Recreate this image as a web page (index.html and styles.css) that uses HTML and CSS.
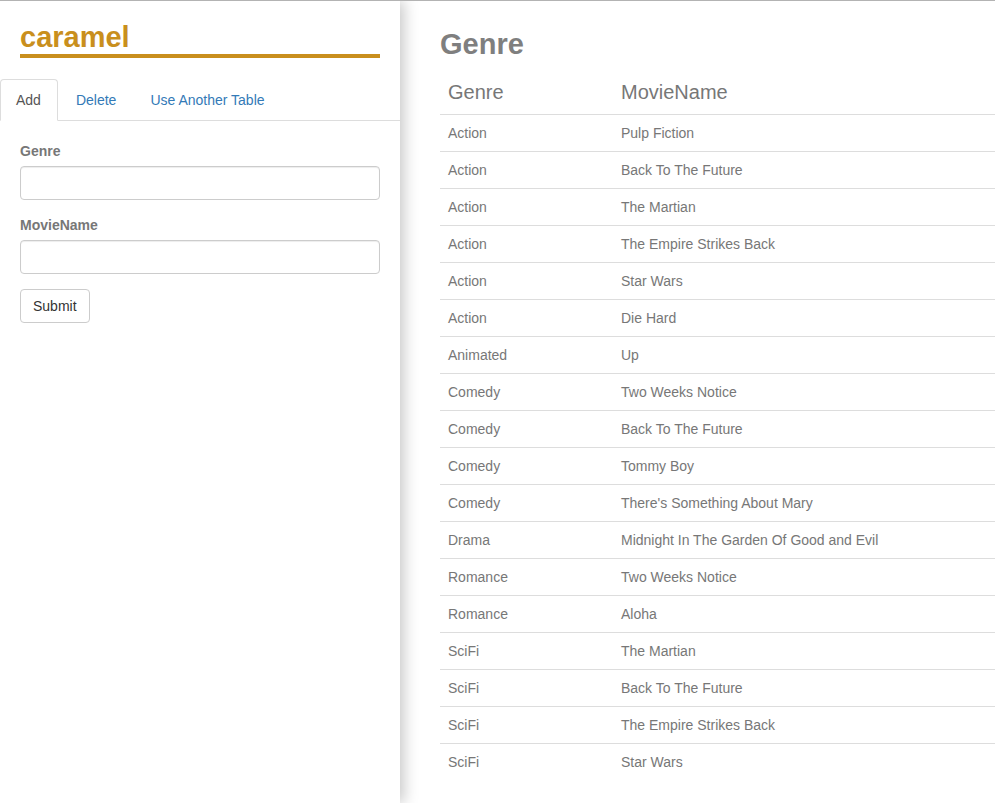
FILE: index.html
```html
<!DOCTYPE html>
<html>
<head>
<meta charset="utf-8">
<link rel="stylesheet" href="styles.css">
</head>
<body>
<div class="app">
  <aside class="sidebar">
    <h1 class="brand">caramel</h1>
    <ul class="tabs">
      <li class="tab active"><a>Add</a></li>
      <li class="tab"><a>Delete</a></li>
      <li class="tab"><a>Use Another Table</a></li>
    </ul>
    <form class="form">
      <div class="group">
        <label class="label">Genre</label>
        <input class="input" type="text">
      </div>
      <div class="group">
        <label class="label">MovieName</label>
        <input class="input" type="text">
      </div>
      <button class="btn" type="button">Submit</button>
    </form>
  </aside>
  <main class="content">
    <h2 class="title">Genre</h2>
    <table class="table">
      <thead>
        <tr><th class="col1">Genre</th><th>MovieName</th></tr>
      </thead>
      <tbody>
        <tr><td>Action</td><td>Pulp Fiction</td></tr>
        <tr><td>Action</td><td>Back To The Future</td></tr>
        <tr><td>Action</td><td>The Martian</td></tr>
        <tr><td>Action</td><td>The Empire Strikes Back</td></tr>
        <tr><td>Action</td><td>Star Wars</td></tr>
        <tr><td>Action</td><td>Die Hard</td></tr>
        <tr><td>Animated</td><td>Up</td></tr>
        <tr><td>Comedy</td><td>Two Weeks Notice</td></tr>
        <tr><td>Comedy</td><td>Back To The Future</td></tr>
        <tr><td>Comedy</td><td>Tommy Boy</td></tr>
        <tr><td>Comedy</td><td>There's Something About Mary</td></tr>
        <tr><td>Drama</td><td>Midnight In The Garden Of Good and Evil</td></tr>
        <tr><td>Romance</td><td>Two Weeks Notice</td></tr>
        <tr><td>Romance</td><td>Aloha</td></tr>
        <tr><td>SciFi</td><td>The Martian</td></tr>
        <tr><td>SciFi</td><td>Back To The Future</td></tr>
        <tr><td>SciFi</td><td>The Empire Strikes Back</td></tr>
        <tr><td>SciFi</td><td>Star Wars</td></tr>
      </tbody>
    </table>
  </main>
</div>
</body>
</html>
```
FILE: styles.css
```css
* { box-sizing: border-box; }
html, body { height: 100%; }
body {
  margin: 0;
  border-top: 1px solid #b3b3b3;
  font-family: "Liberation Sans", Arial, sans-serif;
  font-size: 14px;
  line-height: 20px;
  color: #333;
  background: #fff;
  overflow: hidden;
}
.app {
  display: flex;
  height: 802px;
}
.sidebar {
  width: 400px;
  flex: 0 0 400px;
  height: 100%;
  padding-top: 20px;
  background: #fff;
  box-shadow: 4px 0 14px rgba(0,0,0,0.22);
  position: relative;
  z-index: 1;
}
.brand {
  margin: 0 20px;
  font-size: 29px;
  font-weight: bold;
  line-height: 32px;
  color: #c98f1d;
  padding-bottom: 1px;
  border-bottom: 4px solid #c98f1d;
}
.tabs {
  list-style: none;
  margin: 21px 0 0;
  padding: 0;
  display: flex;
  border-bottom: 1px solid #ddd;
}
.tab {
  margin-bottom: -1px;
  margin-right: 2px;
}
.tab a {
  display: block;
  padding: 10px 15px;
  line-height: 20px;
  border: 1px solid transparent;
  border-radius: 4px 4px 0 0;
  color: #337ab7;
}
.tab.active a {
  padding: 10px 16px 10px 15px;
  color: #555;
  background: #fff;
  border-color: #ddd #ddd transparent #ddd;
}
.form {
  padding: 20px;
}
.group {
  margin-bottom: 15px;
}
.label {
  display: block;
  font-weight: bold;
  color: #777;
  margin-bottom: 5px;
}
.input {
  display: block;
  width: 100%;
  height: 34px;
  padding: 6px 12px;
  border: 1px solid #ccc;
  border-radius: 4px;
  box-shadow: inset 0 1px 1px rgba(0,0,0,0.075);
  font: inherit;
  margin: 0;
}
.btn {
  display: block;
  height: 34px;
  padding: 6px 12px;
  border: 1px solid #ccc;
  border-radius: 4px;
  background: #fff;
  color: #333;
  font: inherit;
  margin: 0;
}
.content {
  flex: 1;
  padding-left: 40px;
}
.title {
  margin: 27px 0 10px;
  font-size: 29px;
  font-weight: bold;
  line-height: 32px;
  color: #7f7f7f;
}
.table {
  width: 100%;
  border-collapse: collapse;
  color: #777;
}
.table th {
  text-align: left;
  font-weight: normal;
  font-size: 20px;
  line-height: 28px;
  padding: 8px;
  border-bottom: 1px solid #ddd;
  color: #777;
}
.table th.col1 { width: 173px; }
.table td {
  padding: 8px;
  line-height: 20px;
  border-top: 1px solid #ddd;
}
```
